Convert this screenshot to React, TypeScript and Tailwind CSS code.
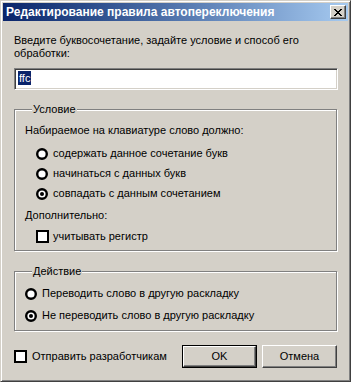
import React from 'react';

// ===========================================
// Classic dialog: autoswitch rule editor
// ===========================================

const FONT = "font-['Liberation_Sans',Arial,sans-serif]";

function Radio({ checked = false }: { checked?: boolean }) {
  return (
    <svg width="12" height="12" viewBox="0 0 12 12" className="shrink-0">
      <circle cx="6" cy="6" r="4.8" fill="#fff" stroke="#000" strokeWidth="2.4" />
      {checked && <circle cx="6" cy="6" r="2" fill="#000" />}
    </svg>
  );
}

function Check() {
  return <span className="block w-[13px] h-[13px] shrink-0 border-2 border-black bg-white" />;
}

function CloseGlyph() {
  // pixel X like the classic caption button
  const rows = ['xx....xx', '.xx..xx.', '..xxxx..', '...xx...', '..xxxx..', '.xx..xx.', 'xx....xx'];
  return (
    <svg width="8" height="7" viewBox="0 0 8 7" shapeRendering="crispEdges">
      {rows.map((r, y) =>
        r.split('').map((c, x) => (c === 'x' ? <rect key={`${x}-${y}`} x={x} y={y} width="1" height="1" fill="#000" /> : null))
      )}
    </svg>
  );
}

function Group({ title, className, children }: { title: string; className: string; children: React.ReactNode }) {
  return (
    <fieldset
      className={`w-[323px] border border-[#808080] shadow-[inset_1px_1px_0_#fff,1px_1px_0_#fff] pl-[10px] ${className}`}
    >
      <legend className="ml-[7px] px-[1px] leading-[13px] bg-[#d4d0c8]">{title}</legend>
      {children}
    </fieldset>
  );
}

function Button({ label, isDefault = false }: { label: string; isDefault?: boolean }) {
  const bevel = (
    <div className="flex-1 flex items-center justify-center border border-t-white border-l-white border-r-[#404040] border-b-[#404040] shadow-[inset_-1px_-1px_0_#808080] bg-[#d4d0c8]">
      {label}
    </div>
  );
  return (
    <button className={`w-[75px] h-[23px] flex ${isDefault ? 'border border-black' : ''}`}>{bevel}</button>
  );
}

export default function App() {
  return (
    <div className={`w-[351px] h-[383px] bg-white ${FONT} text-[11px] leading-[13px] text-black`}>
      <div className="w-[351px] h-[382px] bg-[#d4d0c8] border border-t-[#d4d0c8] border-l-[#d4d0c8] border-r-[#404040] border-b-[#404040] shadow-[inset_1px_1px_0_#fff,inset_-1px_-1px_0_#808080] p-[2px] flex flex-col">
        {/* Title bar */}
        <div className="h-[18px] flex items-center bg-gradient-to-r from-[#0a246a] to-[#a6caf0] pl-[3px] pr-[2px]">
          <span className="text-white font-bold text-[12px] leading-[14px]">Редактирование правила автопереключения</span>
          <div className="ml-auto w-[16px] h-[14px] flex items-center justify-center border border-t-white border-l-white border-r-[#404040] border-b-[#404040] shadow-[inset_-1px_-1px_0_#808080] bg-[#d4d0c8]">
            <CloseGlyph />
          </div>
        </div>

        {/* Body */}
        <div className="flex flex-col pl-[11px]">
          <p className="mt-[13px]">
            Введите буквосочетание, задайте условие и способ его
            <br />
            обработки:
          </p>

          <div className="mt-[8px] w-[324px] h-[22px] border border-t-[#808080] border-l-[#808080] border-r-white border-b-white shadow-[inset_1px_1px_0_#404040,inset_-1px_-1px_0_#d4d0c8] bg-white pl-[3px] pt-[2px]">
            <span className="inline-block bg-[#0a246a] text-white leading-[14px] px-[1px]">ffc</span>
          </div>

          <Group title="Условие" className="mt-[13px] h-[148px]">
            <p className="mt-[8px]">Набираемое на клавиатуре слово должно:</p>
            <div className="mt-[10px] ml-[11px] flex flex-col gap-[7px]">
              <label className="h-[13px] flex items-center gap-[5px]">
                <Radio />
                содержать данное сочетание букв
              </label>
              <label className="h-[13px] flex items-center gap-[5px]">
                <Radio />
                начинаться с данных букв
              </label>
              <label className="h-[13px] flex items-center gap-[5px]">
                <Radio checked />
                совпадать с данным сочетанием
              </label>
            </div>
            <p className="mt-[9px]">Дополнительно:</p>
            <label className="mt-[8px] ml-[11px] h-[13px] flex items-center gap-[4px]">
              <Check />
              учитывать регистр
            </label>
          </Group>

          <Group title="Действие" className="mt-[14px] h-[66px]">
            <div className="mt-[9px] flex flex-col gap-[9px]">
              <label className="h-[13px] flex items-center gap-[5px]">
                <Radio />
                Переводить слово в другую раскладку
              </label>
              <label className="h-[13px] flex items-center gap-[5px]">
                <Radio checked />
                Не переводить слово в другую раскладку
              </label>
            </div>
          </Group>

          <div className="mt-[14px] w-[323px] flex items-center">
            <label className="flex items-center gap-[5px]">
              <Check />
              Отправить разработчикам
            </label>
            <div className="ml-auto flex gap-[5px]">
              <Button label="OK" isDefault />
              <Button label="Отмена" />
            </div>
          </div>
        </div>
      </div>
    </div>
  );
}
